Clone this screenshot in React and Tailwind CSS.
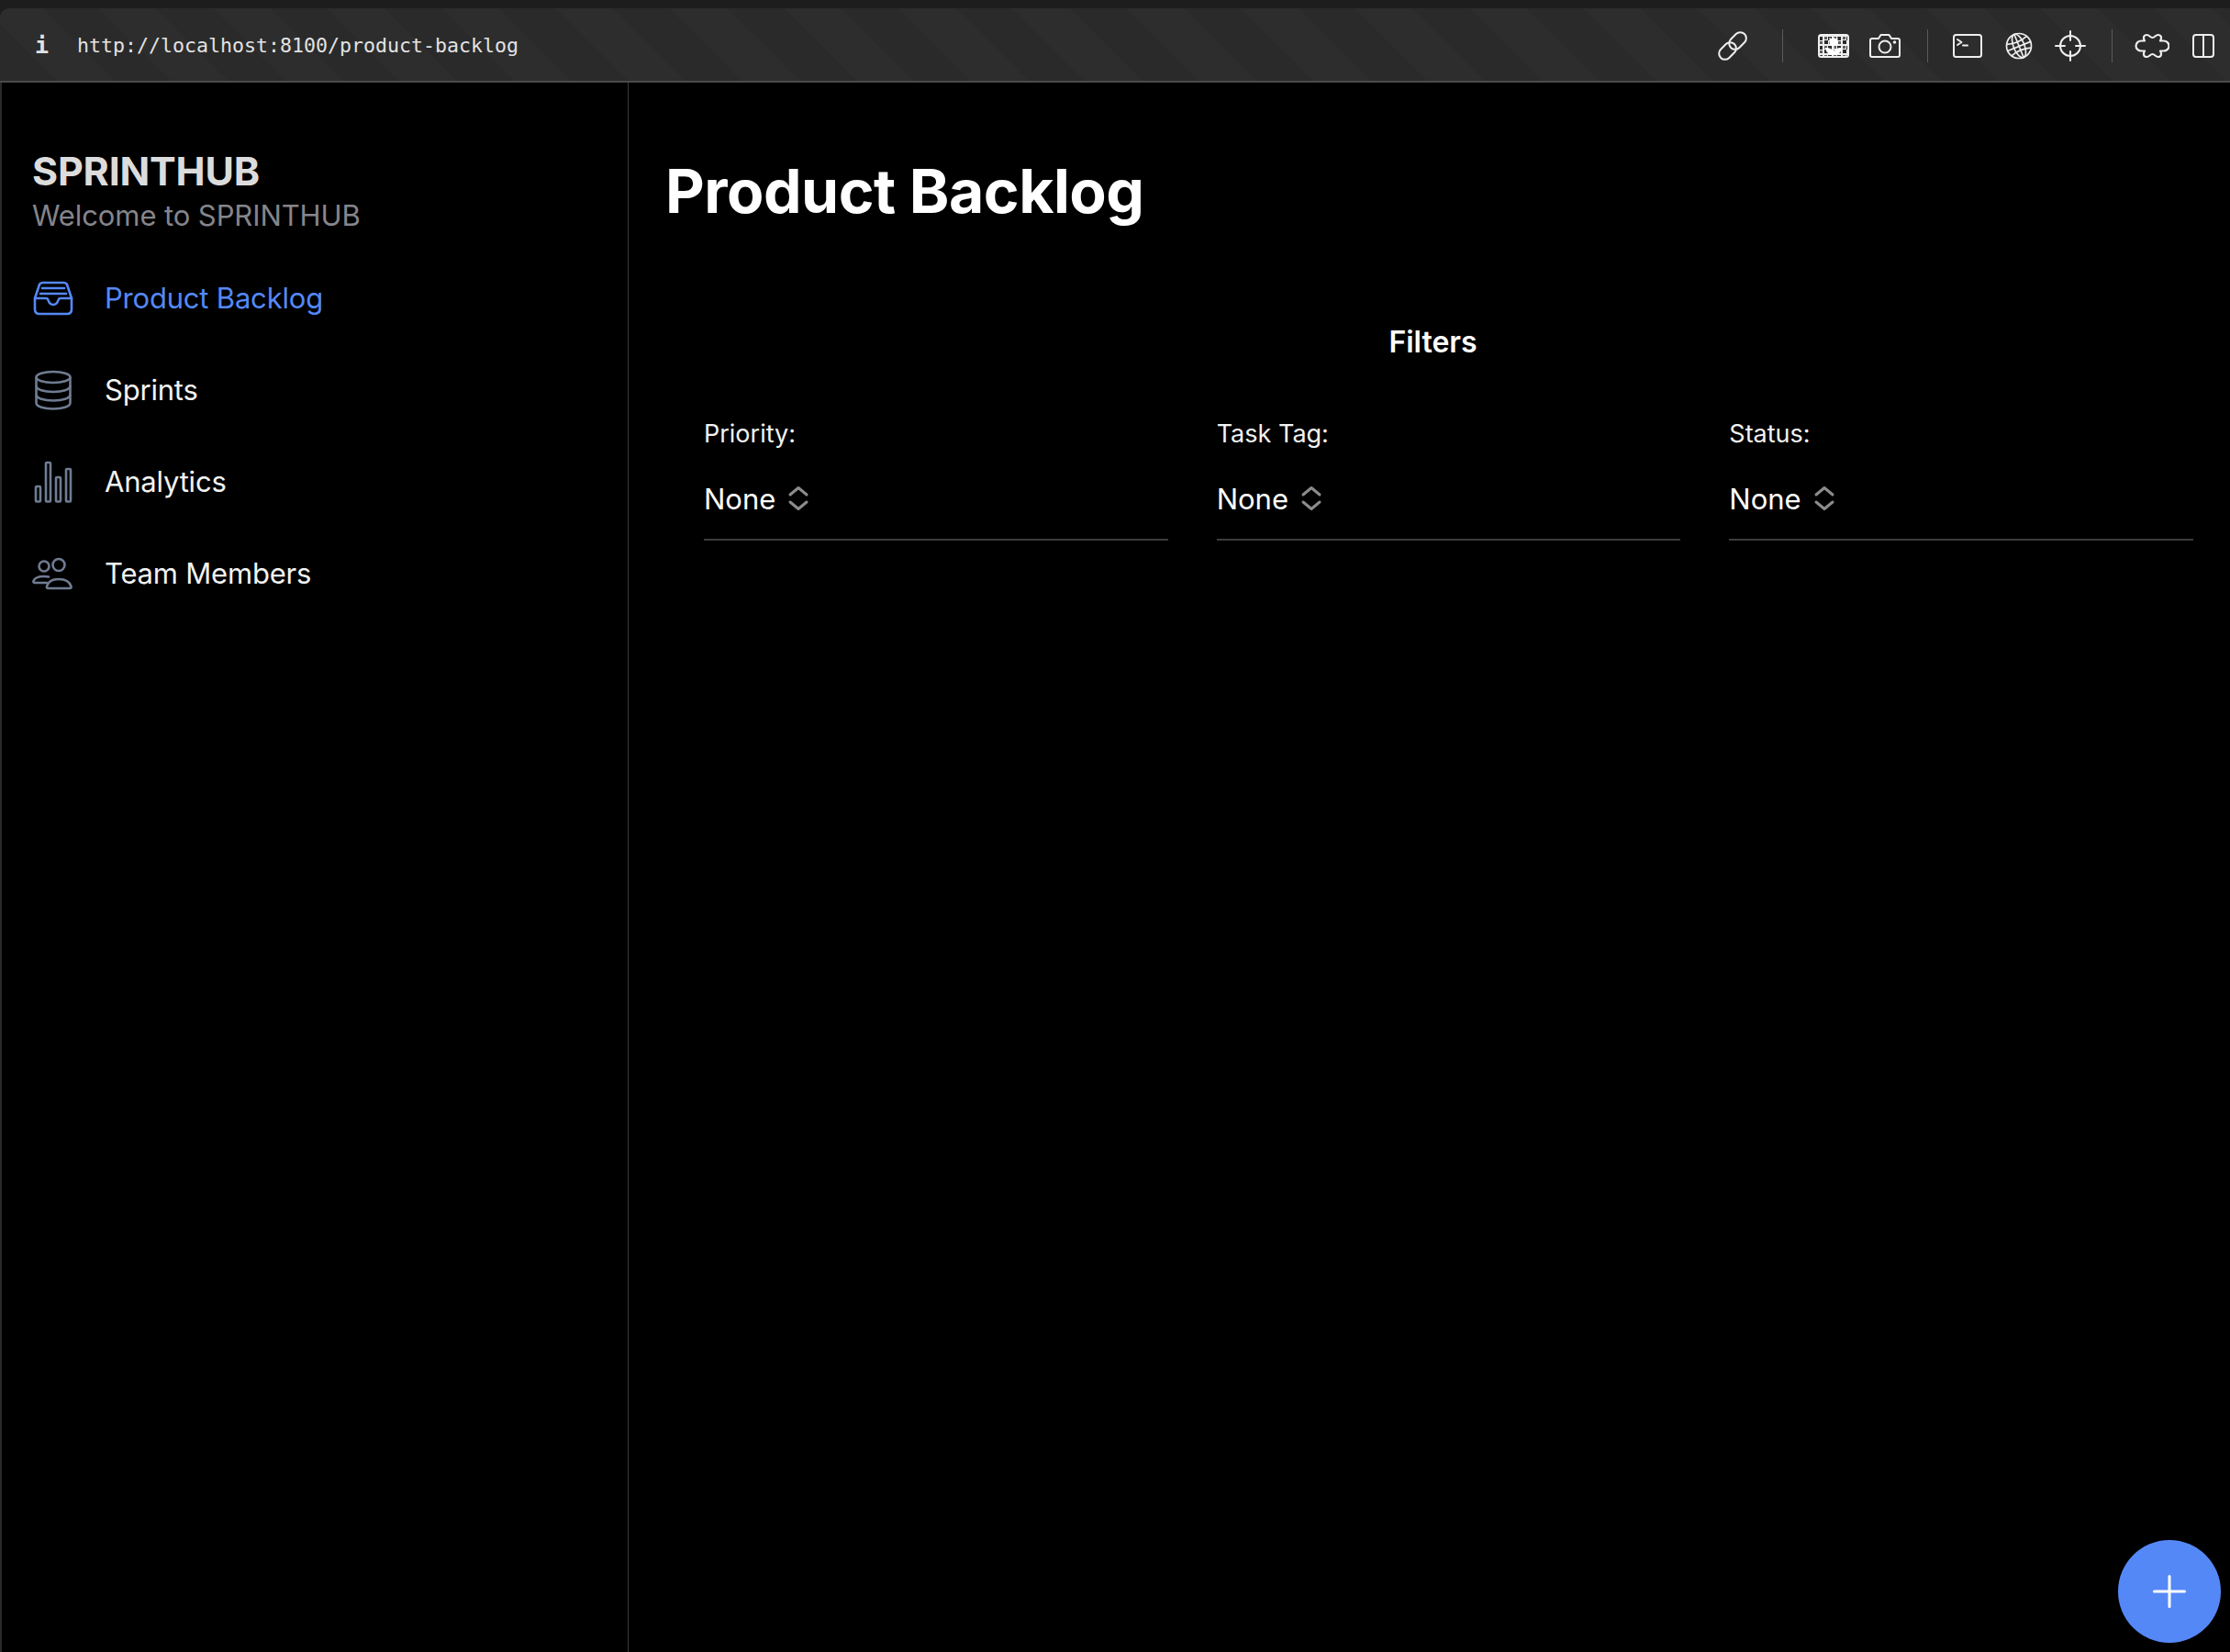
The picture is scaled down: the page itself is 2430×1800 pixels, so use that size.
import React from 'react';

const navItems = [
    { label: 'Product Backlog', icon: 'inbox', active: true },
    { label: 'Sprints', icon: 'database' },
    { label: 'Analytics', icon: 'bars' },
    { label: 'Team Members', icon: 'people' },
];

const filters = ['Priority:', 'Task Tag:', 'Status:'];

const NavIcon = ({ name }) => {
    if (name === 'inbox') {
        return (
            <svg width="44" height="38" viewBox="0 0 44 38" fill="none" stroke="currentColor" strokeWidth="2.6" strokeLinecap="round" strokeLinejoin="round">
                <path d="M2 19 L7 4 Q8 2 11 2 H33 Q36 2 37 4 L42 19 V31 Q42 36 37 36 H7 Q2 36 2 31 Z" />
                <path d="M2 19 H14 Q16 19 16.500 21 Q18 26 22 26 Q26 26 27.500 21 Q28 19 30 19 H42" />
                <path d="M10 8 H34 M8 14 H36" />
            </svg>
        );
    }
    if (name === 'database') {
        return (
            <svg width="42" height="44" viewBox="0 0 42 44" fill="none" stroke="currentColor" strokeWidth="2.6">
                <ellipse cx="21" cy="8" rx="18.500" ry="6" />
                <path d="M2.500 8 V36 C2.500 40 11 42.500 21 42.500 C31 42.500 39.500 40 39.500 36 V8" />
                <path d="M2.500 17.500 C2.500 21.500 11 24 21 24 C31 24 39.500 21.500 39.500 17.500" />
                <path d="M2.500 27 C2.500 31 11 33.500 21 33.500 C31 33.500 39.500 31 39.500 27" />
            </svg>
        );
    }
    if (name === 'bars') {
        return (
            <svg width="42" height="46" viewBox="0 0 42 46" fill="none" stroke="currentColor" strokeWidth="2.6">
                <rect x="2" y="28" width="5" height="16.500" rx="1" />
                <rect x="13" y="2" width="5" height="42.500" rx="1" />
                <rect x="24" y="18" width="5" height="26.500" rx="1" />
                <rect x="35" y="9" width="5" height="35.500" rx="1" />
            </svg>
        );
    }
    return (
        <svg width="46" height="36" viewBox="0 0 46 36" fill="none" stroke="currentColor" strokeWidth="2.6" strokeLinecap="round" strokeLinejoin="round">
            <circle cx="13" cy="10" r="5.500" />
            <circle cx="29" cy="8.500" r="6.500" />
            <path d="M16 28 H3 Q1 28 1.500 26 Q3.500 21 13 21 Q15.500 21 18 21.500" />
            <path d="M17.500 34 Q15.500 34 16 32 Q18 24 29 24 Q40 24 42.500 32 Q43 34 41 34 Z" />
        </svg>
    );
};

const ToolIcon = ({ name }) => {
    const props = { width: 34, height: 34, viewBox: '0 0 34 34', fill: 'none', stroke: 'currentColor', strokeWidth: 2, strokeLinecap: 'round', strokeLinejoin: 'round' };
    if (name === 'link') {
        return (
            <svg {...props}>
                <rect x="16" y="1" width="13" height="21" rx="6.500" transform="rotate(45 22.500 11.500)" />
                <rect x="5" y="12" width="13" height="21" rx="6.500" transform="rotate(45 11.500 22.500)" />
            </svg>
        );
    }
    if (name === 'macro') {
        return (
            <svg {...props}>
                <defs>
                    <pattern id="checker" x="1" y="1" width="10" height="10" patternUnits="userSpaceOnUse">
                        <rect width="5" height="5" fill="#5e5e5e" />
                        <rect x="5" y="5" width="5" height="5" fill="#5e5e5e" />
                    </pattern>
                </defs>
                <rect x="1" y="5" width="32" height="24" fill="url(#checker)" stroke="none" />
                <rect x="1" y="5" width="32" height="24" rx="2.500" />
                <path d="M12.500 7.500 L15 9.500 L17 7.500 L19 9.500 L21.500 7.500 V13 Q21.500 17 17 17 Q12.500 17 12.500 13 Z" fill="#ffffff" stroke="none" />
                <path d="M17 16 V26.500 M17 26.500 Q9.500 26.500 8.500 19.500 Q15.500 19.500 17 24 Q18.500 19.500 25.500 19.500 Q24.500 26.500 17 26.500" fill="#ffffff" stroke="#ffffff" strokeWidth="1" />
            </svg>
        );
    }
    if (name === 'camera') {
        return (
            <svg {...props}>
                <path d="M3 9 H10 L12.500 5 H21.500 L24 9 H31 Q33 9 33 11 V27 Q33 29 31 29 H3 Q1 29 1 27 V11 Q1 9 3 9 Z" />
                <circle cx="17" cy="18" r="6.500" />
                <circle cx="27.500" cy="13" r="0.800" fill="currentColor" />
            </svg>
        );
    }
    if (name === 'terminal') {
        return (
            <svg {...props}>
                <rect x="2" y="5" width="30" height="24" rx="2.500" />
                <path d="M6 10 L10.500 13 L6 16 M12 16.500 H17" />
            </svg>
        );
    }
    if (name === 'globe') {
        return (
            <svg {...props} strokeWidth="1.700">
                <circle cx="17" cy="17" r="13.500" />
                <g transform="rotate(-22 17 17)">
                    <ellipse cx="17" cy="17" rx="6" ry="13.500" />
                    <path d="M17 3.500 V30.500 M5.500 10.500 Q17 14.500 28.500 10.500 M3.500 17.500 H30.500 M5.500 24 Q17 20 28.500 24" />
                </g>
            </svg>
        );
    }
    if (name === 'crosshair') {
        return (
            <svg {...props}>
                <circle cx="17" cy="17" r="11" />
                <path d="M17 1 V11 M17 23 V33 M1 17 H11 M23 17 H33" />
            </svg>
        );
    }
    if (name === 'puzzle') {
        return (
            <svg {...props} width="38" viewBox="0 0 38 34" strokeWidth="2.200">
                <path d="M7.500 11.500 H11 C9 8 10 5 13.500 5 C16 5 17 8 19.500 8 C22 8 23 5 25.500 5 C29 5 30 8 28 11.500 H31.500 C35 11.500 37.500 14 37.500 17 C37.500 20 35 22.500 31.500 22.500 H28 C30 26 29 29 25.500 29 C23 29 22 26 19.500 26 C17 26 16 29 13.500 29 C10 29 9 26 11 22.500 H7.500 C4 22.500 1.500 20 1.500 17 C1.500 14 4 11.500 7.500 11.500 Z" />
            </svg>
        );
    }
    return (
        <svg {...props} width="28" viewBox="0 0 28 34">
            <rect x="3" y="5" width="22" height="24" rx="3" />
            <path d="M14 5 V29" />
        </svg>
    );
};

const Toolbar = () => (
    <div className="h-[90px] bg-[#1d1d1d] pt-[9px]">
        <div className="flex h-[81px] items-center rounded-tl-[10px] border-b-2 border-[#4a4a4a] bg-[repeating-linear-gradient(45deg,#2a2a2a_0px,#2a2a2a_44px,#2d2d2d_44px,#2d2d2d_88px)] pl-[38px] pr-[1px] pt-[3px] text-[#e2e2e2]">
            <span className="w-[46px] font-['DejaVu_Sans_Mono',monospace] text-[25px] font-bold">i</span>
            <span className="font-['DejaVu_Sans_Mono',monospace] text-[21.600px]">http://localhost:8100/product-backlog</span>
            <div className="ml-auto flex items-center text-[#eeeeee]">
                <div className="flex w-[56px] justify-center"><ToolIcon name="link" /></div>
                <div className="ml-[26px] mr-[27px] h-[36px] w-px bg-[#5a5a5a]" />
                <div className="flex w-[56px] justify-center"><ToolIcon name="macro" /></div>
                <div className="flex w-[56px] justify-center"><ToolIcon name="camera" /></div>
                <div className="ml-[18px] mr-[15px] h-[36px] w-px bg-[#5a5a5a]" />
                <div className="flex w-[56px] justify-center"><ToolIcon name="terminal" /></div>
                <div className="flex w-[56px] justify-center"><ToolIcon name="globe" /></div>
                <div className="flex w-[56px] justify-center"><ToolIcon name="crosshair" /></div>
                <div className="ml-[17px] mr-[15px] h-[36px] w-px bg-[#5a5a5a]" />
                <div className="flex w-[56px] justify-center"><ToolIcon name="puzzle" /></div>
                <div className="flex w-[56px] justify-center"><ToolIcon name="split" /></div>
            </div>
        </div>
    </div>
);

const Sidebar = () => (
    <aside className="w-[685px] shrink-0 border-l-2 border-r border-l-[#2a2a2a] border-r-[#3a3a3a] pl-[33px] pt-[70px]">
        <h2 className="text-[43px] font-bold leading-[52px] tracking-[-0.2px] text-[#dcdcdc]">SPRINTHUB</h2>
        <p className="mt-[3px] text-[31px] leading-[40px] tracking-[-0.1px] text-[#85858b]">Welcome to SPRINTHUB</p>
        <nav className="mt-[20px]">
            {navItems.map(item => (
                <div key={item.label} className={`flex h-[100px] items-center ${item.active ? 'text-[#5588f7]' : 'text-[#f2f2f2]'}`}>
                    <span className={`flex w-[46px] justify-center ${item.active ? 'text-[#5588f7]' : 'text-[#6f7c92]'}`}>
                        <NavIcon name={item.icon} />
                    </span>
                    <span className="ml-[33px] text-[31px] tracking-[-0.2px]">{item.label}</span>
                </div>
            ))}
        </nav>
    </aside>
);

const App = () => (
    <div className="relative flex h-[1800px] w-[2430px] flex-col overflow-hidden bg-black font-['Inter',sans-serif] text-white">
        <Toolbar />
        <div className="flex flex-1">
            <Sidebar />
            <main className="flex-1 pl-[40px] pt-[78px]">
                <h1 className="text-[66px] font-bold leading-[80px] tracking-[-0.5px]">Product Backlog</h1>
                <div className="mt-[105px] w-[1673px] text-center text-[32px] font-semibold leading-[40px]">Filters</div>
                <div className="ml-[42px] mt-[62px] grid w-[1623px] grid-cols-3 gap-x-[53px]">
                    {filters.map(label => (
                        <div key={label}>
                            <div className="text-[27px] leading-[36px] text-[#f2f2f2]">{label}</div>
                            <div className="mt-[33px] flex items-center border-b-2 border-[#3c3c3c] pb-[23px] text-[31px] leading-[40px]">
                                <span>None</span>
                                <svg className="ml-[13px] -mt-[2px]" width="24" height="28" viewBox="0 0 24 28" fill="none" stroke="#8c8c8c" strokeWidth="3" strokeLinecap="round" strokeLinejoin="round">
                                    <path d="M3 10 L12 2.500 L21 10" />
                                    <path d="M3 18 L12 25.500 L21 18" />
                                </svg>
                            </div>
                        </div>
                    ))}
                </div>
            </main>
        </div>
        <button className="absolute bottom-[10px] right-[10px] flex h-[112px] w-[112px] items-center justify-center rounded-full bg-[#5588f7]">
            <svg width="36" height="36" viewBox="0 0 36 36" fill="none" stroke="white" strokeWidth="3" strokeLinecap="round">
                <path d="M18 1.500 V34.500 M1.500 18 H34.500" />
            </svg>
        </button>
    </div>
);

export default App;
